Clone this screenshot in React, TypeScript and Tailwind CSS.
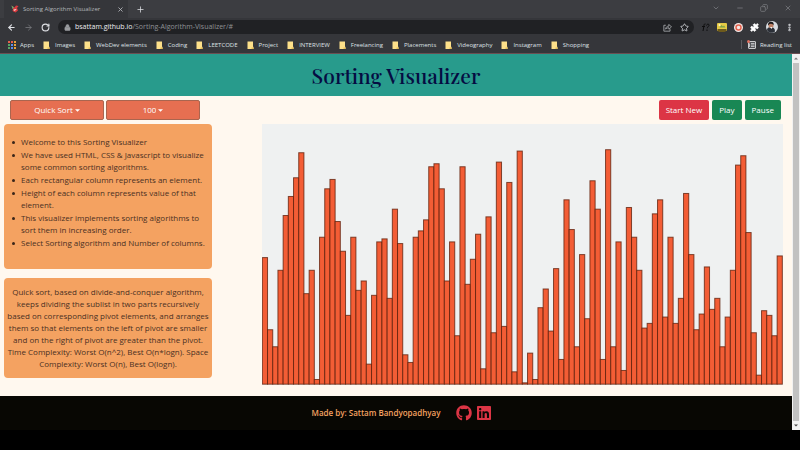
import React from "react";
import { ArrowLeft, ArrowRight, ChevronDown, Copy, Lock, Minus, MoreVertical, Plus, Puzzle, RotateCw, Star, X } from "lucide-react";
import { FaGithub, FaLinkedin } from "react-icons/fa";

const bookmarks = [
  "Images",
  "WebDev elements",
  "Coding",
  "LEETCODE",
  "Project",
  "INTERVIEW",
  "Freelancing",
  "Placements",
  "Videography",
  "Instagram",
  "Shopping",
];

const instructions = [
  "Welcome to this Sorting Visualizer",
  "We have used HTML, CSS & Javascript to visualize some common sorting algorithms.",
  "Each rectangular column represents an element.",
  "Height of each column represents value of that element.",
  "This visualizer implements sorting algorithms to sort them in increasing order.",
  "Select Sorting algorithm and Number of columns.",
];

const BASELINE = 732;
const COLUMN = 15.6;
// Top edge of every column, measured down from the chart's reference line.
const columnTops = [
  352, 568, 619, 390, 226, 169, 113, 38, 460, 390, 717, 291, 146, 118, 244, 333, 525, 291, 450, 422,
  671, 465, 305, 296, 474, 207, 310, 643, 666, 291, 272, 239, 80, 71, 146, 422, 305, 586, 80, 432,
  357, 282, 685, 230, 577, 66, 558, 127, 694, 33, 727, 638, 717, 502, 446, 572, 385, 657, 179, 268,
  619, 343, 535, 122, 207, 657, 29, 619, 305, 690, 202, 291, 390, 563, 549, 221, 179, 530, 291, 549,
  474, 160, 343, 568, 521, 380, 507, 474, 619, 530, 390, 75, 47, 277, 577, 704, 511, 525, 586, 347,
];

function Favicon() {
  return (
    <svg viewBox="0 0 16 16" className="size-2">
      <path d="M1 1l6 4 3-4 5 1-3 4 2 5-5 4-6-3 1-3z" fill="#d93a3f" />
      <path d="M1 1l5 4-3 3z" fill="#5fae6a" />
      <path d="M5 9l6-1-1 2-4 2z" fill="#f3d9d2" />
    </svg>
  );
}

function AppsIcon() {
  const fills = ["#e8604c", "#e8604c", "#e9a23b", "#57a867", "#5a8dee", "#e9a23b", "#57a867", "#5a8dee", "#e9a23b"];
  return (
    <svg viewBox="0 0 8 8" className="size-2">
      {fills.map((f, i) => (
        <rect key={i} x={(i % 3) * 3} y={Math.floor(i / 3) * 3} width="2" height="2" fill={f} />
      ))}
    </svg>
  );
}

function FolderIcon() {
  return (
    <svg viewBox="0 0 14 16" className="h-2 w-[7px] shrink-0">
      <path d="M1 1h11v10l1 1v4H1z" fill="#fde08a" />
      <path d="M9 13h4v3H9z" fill="#e5bd52" />
    </svg>
  );
}

function ShareIcon() {
  return (
    <svg viewBox="0 0 16 16" className="size-[9px]" fill="none" stroke="#a9abae" strokeWidth="1.5">
      <path d="M5 4H1.500v10.500h11V11M4.500 11c.5-4 3-5.500 6-5.500V2.500L15 7l-4.500 4V8.500c-2.500 0-4.500.5-6 2.500z" />
    </svg>
  );
}

function ReadingIcon() {
  return (
    <svg viewBox="0 0 18 18" className="size-[9px]">
      <rect x="3" y="3" width="14" height="14" rx="1" fill="#55565a" stroke="#c9cacc" strokeWidth="2" />
      <path d="M8 7h7M8 10h7M8 13h7M5 7v7" stroke="#dcdde0" strokeWidth="1.5" />
      <circle cx="3" cy="3" r="3" fill="#e0705f" />
    </svg>
  );
}

function Extensions() {
  return (
    <>
      <button aria-label="Font finder" className="flex">
        <svg viewBox="0 0 18 18" className="size-[9px]" fill="none" stroke="#0d0d0e" strokeWidth="2">
          <path d="M9 2C6 1 6 4 5.500 8L4 16M2 7h6M11 5c1-4 6-3 5 0-.5 2-3 2.500-3.500 5.500M12 13v3" />
        </svg>
      </button>
      <button aria-label="Picture extension" className="flex">
        <svg viewBox="0 0 20 18" className="h-[9px] w-[10px]">
          <rect width="20" height="16" rx="2" fill="#e5ca45" />
          <path d="M1 16l0-4h18v4l-4 2H5z" fill="#6d5a1c" />
          <path d="M5 9l4-5 3 3 2-2 3 4z" fill="#77a04a" />
          <circle cx="5" cy="4" r="2" fill="#fff6c9" />
        </svg>
      </button>
      <button aria-label="Ring extension" className="flex">
        <svg viewBox="0 0 18 18" className="size-[9px]">
          <circle cx="9" cy="9" r="9" fill="#f5e9e6" />
          <circle cx="9" cy="9" r="5" fill="none" stroke="#e2634f" strokeWidth="3" />
        </svg>
      </button>
      <button aria-label="Extensions" className="flex">
        <Puzzle className="size-[9px] fill-white text-white" />
      </button>
      <button aria-label="Profile" className="flex">
        <svg viewBox="0 0 24 24" className="size-3">
          <circle cx="12" cy="12" r="12" fill="#d9dde2" />
          <path d="M2 18c0-4 3-6 8-6s8 3 8 9c-4 4-13 4-16-3z" fill="#2c3038" />
          <circle cx="10" cy="9" r="5" fill="#bd8065" />
          <path d="M4 9c-1-6 4-9 8-7 3 0 4 4 3 6-3-3-7-3-9-1z" fill="#1d1a1b" />
          <path d="M8 12l5 0-2 4z" fill="#f4f4f4" />
        </svg>
      </button>
    </>
  );
}

function Browser() {
  return (
    <div className="bg-[#35363a] font-['Open_Sans','Noto_Sans',sans-serif] text-[6px] leading-[8px] text-[#dfe1e5]">
      <div className="flex h-[18px] bg-[#3c3d41] pl-1">
        <div className="flex w-[124px] items-center bg-[#35363a] pr-1 pl-[7px] text-[#b4b6ba]">
          <Favicon />
          <span className="ml-1 grow whitespace-nowrap">Sorting Algorithm Visualizer</span>
          <button aria-label="Close tab"><X className="size-[7px]" strokeWidth={3} /></button>
        </div>
        <button aria-label="New tab" className="ml-2"><Plus className="size-[9px]" strokeWidth={2} /></button>
        <div className="ml-auto flex items-center gap-4 pr-2 pb-0.5 text-[#85878b]">
          <button aria-label="Search tabs"><ChevronDown className="size-2" /></button>
          <button aria-label="Minimize"><Minus className="size-2" /></button>
          <button aria-label="Restore"><Copy className="size-2 -scale-x-100" /></button>
          <button aria-label="Close"><X className="size-2" /></button>
        </div>
      </div>
      <div className="flex h-[18px] items-center pr-1.5 pl-[7px]">
        <button aria-label="Back"><ArrowLeft className="size-[9px]" strokeWidth={3} /></button>
        <button aria-label="Forward" className="ml-2 text-[#7d7f83]"><ArrowRight className="size-[9px]" strokeWidth={2} /></button>
        <button aria-label="Reload" className="ml-2"><RotateCw className="size-[9px]" strokeWidth={3} /></button>
        <div className="ml-2 flex h-[14px] grow items-center rounded-full bg-[#202124] pr-[5px] pl-1.5">
          <Lock className="mr-1 size-[7px] fill-[#9a9ca0] text-[#9a9ca0]" />
          <a href="#" className="grow text-[7px] text-[#8f9195]">
            <span className="text-[#eceef1]">bsattam.github.io</span>/Sorting-Algorithm-Visualizer/#
          </a>
          <button aria-label="Share"><ShareIcon /></button>
          <button aria-label="Bookmark this page" className="ml-2"><Star className="size-[9px]" strokeWidth={2} /></button>
        </div>
        <div className="ml-[7px] flex items-center gap-[7px]">
          <Extensions />
          <button aria-label="Menu"><MoreVertical className="size-[9px]" strokeWidth={4} /></button>
        </div>
      </div>
      <nav className="flex h-[18px] items-center gap-[9px] border-b border-[#6a4f52] pr-2 pl-2 whitespace-nowrap">
        <a href="#" className="flex items-center gap-1"><AppsIcon />Apps</a>
        {bookmarks.map((name) => (
          <a key={name} href="#" className="flex items-center gap-[5px]"><FolderIcon />{name}</a>
        ))}
        <a href="#" className="ml-auto flex items-center gap-1 border-l border-[#5b5c60] pl-[5px]"><ReadingIcon />Reading list</a>
      </nav>
    </div>
  );
}

function Dropdown({ label, options }: { label: string; options: string[] }) {
  return (
    <label className="flex h-5 w-[94px] items-center justify-center gap-[2px] rounded-[2px] border border-[#a9654f] bg-[#e66f51] text-white">
      <select aria-label={label} className="appearance-none bg-transparent outline-none [field-sizing:content]">
        {options.map((o) => <option key={o}>{o}</option>)}
      </select>
      <svg viewBox="0 0 10 5" className="h-[3px] w-[5px]"><path d="M0 0h10L5 5z" fill="white" /></svg>
    </label>
  );
}

function Chart() {
  return (
    <svg
      role="img"
      aria-label="Columns being sorted"
      viewBox="0 -48 1563 780"
      preserveAspectRatio="none"
      className="block aspect-[2/1] w-full bg-[#eff1f1]"
    >
      {columnTops.map((top, i) => (
        <rect
          key={i}
          x={i * COLUMN + 1}
          y={top}
          width={COLUMN}
          height={BASELINE - 1 - top}
          fill="#f35d35"
          stroke="#5a1c08"
          strokeOpacity="0.75"
          strokeWidth="3"
        />
      ))}
    </svg>
  );
}

function ScrollBar() {
  return (
    <div aria-hidden="true" className="flex w-2 shrink-0 flex-col items-center justify-between bg-[#f1f1f1] py-[3px]">
      <svg viewBox="0 0 8 4" className="h-[3px] w-1"><path d="M0 4h8L4 0z" fill="#777" /></svg>
      <div className="my-[3px] w-1.5 grow bg-[#c1c1c1]" />
      <svg viewBox="0 0 8 4" className="h-[3px] w-1"><path d="M0 0h8L4 4z" fill="#444" /></svg>
    </div>
  );
}

export default function App() {
  return (
    <div className="min-h-screen bg-black">
      <Browser />
      <div className="flex font-['Open_Sans','Noto_Sans',sans-serif] text-[8px] leading-[12px] text-[#4a3023]">
        <div className="min-w-0 grow bg-[#fff8ef]">
          <header className="flex h-[42px] items-center justify-center bg-[#289b8c]">
            <h1 className="font-['Playfair_Display','Liberation_Serif',serif] text-[21px] leading-[28px] font-medium text-[#050c42]">
              Sorting Visualizer
            </h1>
          </header>
          <div className="flex h-7 items-center pr-[11px] pl-[10px]">
            <div className="flex gap-[2px]">
              <Dropdown label="Algorithm" options={["Quick Sort", "Merge Sort", "Bubble Sort"]} />
              <Dropdown label="Number of columns" options={["100", "50", "20"]} />
            </div>
            <div className="ml-auto flex gap-[3px] text-white">
              <button className="h-5 rounded-[2px] bg-[#dc3545] px-[7px]">Start New</button>
              <button className="h-5 rounded-[2px] bg-[#198754] px-[7px]">Play</button>
              <button className="h-5 rounded-[2px] bg-[#198754] px-[7px]">Pause</button>
            </div>
          </div>
          <main className="flex items-start justify-between gap-[50px] pr-[9px] pb-[11px] pl-1">
            <div className="flex w-[208px] shrink-0 flex-col gap-[9px]">
              <ul className="flex flex-col gap-px rounded-[4px] bg-[#f4a261] pt-3 pr-1 pb-5 pl-2">
                {instructions.map((text) => (
                  <li
                    key={text}
                    className="flex before:mt-[5px] before:mr-[6px] before:size-[3px] before:shrink-0 before:rounded-full before:bg-[#3a2519] before:content-['']"
                  >
                    {text}
                  </li>
                ))}
              </ul>
              <p className="rounded-[4px] bg-[#f4a261] px-0.5 py-2 text-center">
                Quick sort, based on divide-and-conquer algorithm, keeps dividing the sublist in two parts recursively based on
                corresponding pivot elements, and arranges them so that elements on the left of pivot are smaller and on the
                right of pivot are greater than the pivot. Time Complexity: Worst O(n^2), Best O(n*logn). Space Complexity:
                Worst O(n), Best O(logn).
              </p>
            </div>
            <div className="min-w-0 grow"><Chart /></div>
          </main>
          <footer className="flex h-[34px] items-center justify-center gap-4 bg-[#080703] pl-3 text-[#f4a261]">
            <span className="font-semibold">Made by: Sattam Bandyopadhyay</span>
            <span className="flex gap-1 text-[#dc3545]">
              <a href="#" aria-label="GitHub"><FaGithub className="size-4" /></a>
              <a href="#" aria-label="LinkedIn"><FaLinkedin className="size-4" /></a>
            </span>
          </footer>
        </div>
        <ScrollBar />
      </div>
    </div>
  );
}
